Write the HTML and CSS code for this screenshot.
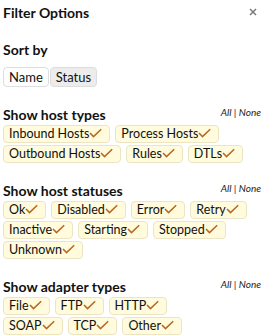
FILE: index.html
```html
<!DOCTYPE html>
<html lang="en">
<head>
<meta charset="UTF-8" />
<meta name="viewport" content="width=device-width, initial-scale=1" />
<link rel="stylesheet" href="styles.css">
</head>
<body>

<div class="panel">
  <div class="panel-head">
    <h1 class="panel-title">Filter Options</h1>
    <button class="close" aria-label="Close">
      <svg width="8" height="8" viewBox="0 0 8 8"><path d="M1 1 L7 7 M7 1 L1 7" stroke="currentColor" stroke-width="1.5"/></svg>
    </button>
  </div>

  <section class="group">
    <h2 class="group-title">Sort by</h2>
    <div class="sort-row">
      <button class="sort-btn">Name</button>
      <button class="sort-btn active">Status</button>
    </div>
  </section>

  <section class="group">
    <div class="group-head">
      <h2 class="group-title">Show host types</h2>
      <div class="toggle-all"><a href="#">All</a> | <a href="#">None</a></div>
    </div>
    <div class="chips" data-group="hostTypes"></div>
  </section>

  <section class="group">
    <div class="group-head">
      <h2 class="group-title">Show host statuses</h2>
      <div class="toggle-all"><a href="#">All</a> | <a href="#">None</a></div>
    </div>
    <div class="chips" data-group="hostStatuses"></div>
  </section>

  <section class="group">
    <div class="group-head">
      <h2 class="group-title">Show adapter types</h2>
      <div class="toggle-all"><a href="#">All</a> | <a href="#">None</a></div>
    </div>
    <div class="chips" data-group="adapterTypes"></div>
  </section>
</div>

<script>
  // one array per row of chips
  const groups = {
    hostTypes: [['Inbound Hosts', 'Process Hosts'], ['Outbound Hosts', 'Rules', 'DTLs']],
    hostStatuses: [['Ok', 'Disabled', 'Error', 'Retry'], ['Inactive', 'Starting', 'Stopped'], ['Unknown']],
    adapterTypes: [['File', 'FTP', 'HTTP'], ['SOAP', 'TCP', 'Other']]
  };

  const check = '<svg class="check" width="13" height="10" viewBox="0 0 13 10"><path d="M1 5 L4.5 8.6 L12.2 1.2" fill="none" stroke="currentColor" stroke-width="1.5"/></svg>';

  document.querySelectorAll('.chips').forEach(box => {
    groups[box.dataset.group].forEach(items => {
      const row = document.createElement('div');
      row.className = 'chip-row';
      items.forEach(label => {
        const chip = document.createElement('span');
        chip.className = 'chip';
        chip.innerHTML = `${label}${check}`;
        row.appendChild(chip);
      });
      box.appendChild(row);
    });
  });
</script>

</body>
</html>
```

FILE: styles.css
```css
body {
  margin: 0;
  padding: 3px;
  font-family: Lato, "Open Sans", sans-serif;
  color: #111;
  background: #fff;
}

.panel-head {
  display: flex;
  justify-content: space-between;
  align-items: flex-start;
}

.panel-title {
  margin: 0;
  font-size: 14px;
  font-weight: 700;
  line-height: 19px;
}

.close {
  border: none;
  background: none;
  padding: 0;
  margin: 5px 4px 0 0;
  width: 8px;
  height: 8px;
  color: #7a7a7a;
  cursor: pointer;
  display: flex;
}

.group {
  margin-top: 18px;
}

.group-head {
  display: flex;
  justify-content: space-between;
  align-items: flex-start;
}

.group-title {
  margin: 0;
  font-size: 14px;
  font-weight: 700;
  line-height: 19px;
}

.toggle-all {
  font-size: 10px;
  font-style: italic;
  line-height: 14px;
  color: #222;
  margin-right: 0;
}

.toggle-all a {
  color: inherit;
  text-decoration: none;
}

.sort-row {
  display: flex;
  gap: 1px;
  margin-top: 8px;
}

.sort-btn {
  font-family: inherit;
  font-size: 13px;
  color: #111;
  height: 20px;
  padding: 0 5px;
  border: 1px solid #ddd;
  border-radius: 4px;
  background: #fff;
  line-height: 18px;
}

.sort-btn.active {
  background: #ececec;
}

.chips {
  display: flex;
  flex-direction: column;
  gap: 2px;
  margin-top: 1px;
}

.chip-row {
  display: flex;
  gap: 5px;
}

.chip {
  display: inline-flex;
  align-items: center;
  height: 18px;
  padding: 0 7px 0 5px;
  border: 1px solid #ebe5c6;
  border-radius: 4px;
  background: #fffbdc;
  font-size: 12.5px;
  line-height: 16px;
  color: #111;
  box-sizing: border-box;
}

.check {
  color: #b9671f;
  margin-top: -3px;
}
```
